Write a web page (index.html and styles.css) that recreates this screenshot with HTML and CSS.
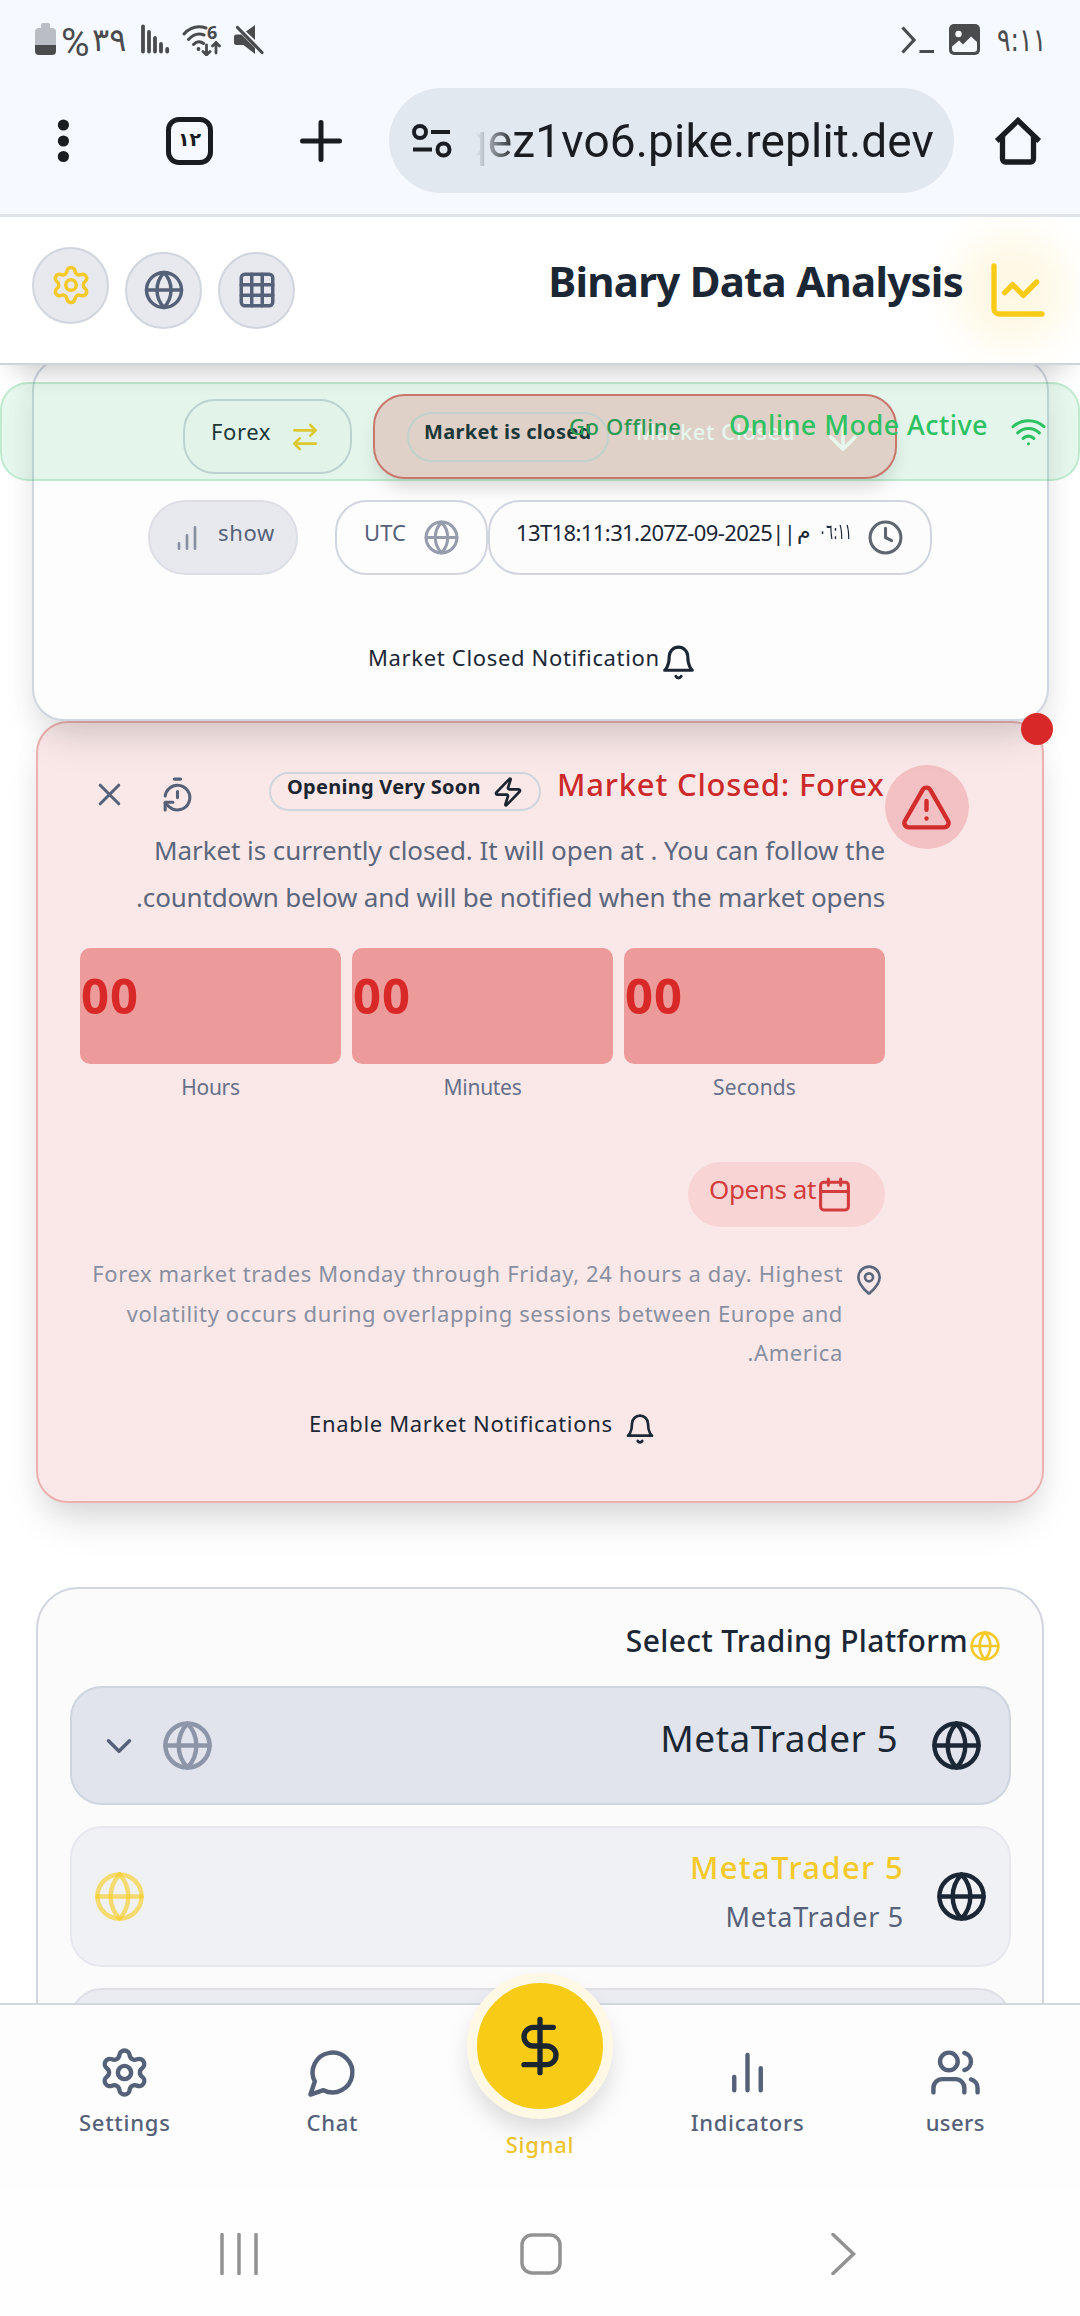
FILE: index.html
```html
<!DOCTYPE html>
<html lang="en">
<head>
<meta charset="utf-8">
<title>Binary Data Analysis</title>
<link rel="stylesheet" href="styles.css">
</head>
<body>
<svg class="sprite" xmlns="http://www.w3.org/2000/svg">
  <symbol id="gear" viewBox="0 0 24 24"><path d="M9.671 4.136a2.34 2.34 0 0 1 4.659 0 2.34 2.34 0 0 0 3.319 1.915 2.34 2.34 0 0 1 2.33 4.033 2.34 2.34 0 0 0 0 3.831 2.34 2.34 0 0 1-2.33 4.033 2.34 2.34 0 0 0-3.319 1.915 2.34 2.34 0 0 1-4.659 0 2.34 2.34 0 0 0-3.32-1.915 2.34 2.34 0 0 1-2.33-4.033 2.34 2.34 0 0 0 0-3.831A2.34 2.34 0 0 1 6.35 6.051a2.34 2.34 0 0 0 3.319-1.915"/><circle cx="12" cy="12" r="3"/></symbol>
  <symbol id="globe" viewBox="0 0 24 24"><circle cx="12" cy="12" r="10"/><path d="M12 2a14.5 14.5 0 0 0 0 20 14.5 14.5 0 0 0 0-20"/><path d="M2 12h20"/></symbol>
  <symbol id="grid" viewBox="0 0 24 24"><rect x="3" y="3" width="18" height="18" rx="2"/><path d="M3 9h18M3 15h18M9 3v18M15 3v18"/></symbol>
  <symbol id="chart-line" viewBox="0 0 24 24"><path d="M3 3v16a2 2 0 0 0 2 2h16"/><path d="m19 9-5 5-4-4-3 3"/></symbol>
  <symbol id="swap" viewBox="0 0 24 24"><path d="m16 3 4 4-4 4M20 7H4M8 21l-4-4 4-4M4 17h16"/></symbol>
  <symbol id="arrow-down" viewBox="0 0 24 24"><path d="M12 5v14M19 12l-7 7-7-7"/></symbol>
  <symbol id="wifi" viewBox="0 0 24 24"><path d="M12 20h.01M2 8.82a15 15 0 0 1 20 0M5 12.859a10 10 0 0 1 14 0M8.5 16.429a5 5 0 0 1 7 0"/></symbol>
  <symbol id="bars-up" viewBox="0 0 24 24"><path d="M6 20v-4M12 20V10M18 20V4"/></symbol>
  <symbol id="bars" viewBox="0 0 24 24"><path d="M18 20V10M12 20V4M6 20v-6"/></symbol>
  <symbol id="clock" viewBox="0 0 24 24"><circle cx="12" cy="12" r="10"/><path d="M12 6v6l4 2"/></symbol>
  <symbol id="bell" viewBox="0 0 24 24"><path d="M6 8a6 6 0 0 1 12 0c0 7 3 9 3 9H3s3-2 3-9"/><path d="M10.3 21a1.94 1.94 0 0 0 3.4 0"/></symbol>
  <symbol id="alert" viewBox="0 0 24 24"><path d="m21.73 18-8-14a2 2 0 0 0-3.48 0l-8 14A2 2 0 0 0 4 21h16a2 2 0 0 0 1.73-3M12 9v4M12 17h.01"/></symbol>
  <symbol id="zap" viewBox="0 0 24 24"><path d="M4 14a1 1 0 0 1-.78-1.63l9.9-10.2a.5.5 0 0 1 .86.46l-1.92 6.02A1 1 0 0 0 13 10h7a1 1 0 0 1 .78 1.63l-9.9 10.2a.5.5 0 0 1-.86-.46l1.92-6.02A1 1 0 0 0 11 14z"/></symbol>
  <symbol id="close" viewBox="0 0 24 24"><path d="M18 6 6 18M6 6l12 12"/></symbol>
  <symbol id="timer" viewBox="0 0 24 24"><path d="M10 2h4M12 14v-4M4 13a8 8 0 0 1 8-7 8 8 0 1 1-5.3 14L4 17.6"/><path d="M9 17H4v5"/></symbol>
  <symbol id="calendar" viewBox="0 0 24 24"><path d="M8 2v4M16 2v4M3 10h18"/><rect x="3" y="4" width="18" height="18" rx="2"/></symbol>
  <symbol id="pin" viewBox="0 0 24 24"><path d="M20 10c0 4.993-5.539 10.193-7.399 11.799a1 1 0 0 1-1.202 0C9.539 20.193 4 14.993 4 10a8 8 0 0 1 16 0"/><circle cx="12" cy="10" r="3"/></symbol>
  <symbol id="chevron" viewBox="0 0 24 24"><path d="m6 9 6 6 6-6"/></symbol>
  <symbol id="chat" viewBox="0 0 24 24"><path d="M7.9 20A9 9 0 1 0 4 16.1L2 22Z"/></symbol>
  <symbol id="dollar" viewBox="0 0 24 24"><path d="M12 2v20M17 5H9.5a3.5 3.5 0 0 0 0 7h5a3.5 3.5 0 0 1 0 7H6"/></symbol>
  <symbol id="users" viewBox="0 0 24 24"><path d="M16 21v-2a4 4 0 0 0-4-4H6a4 4 0 0 0-4 4v2"/><circle cx="9" cy="7" r="4"/><path d="M22 21v-2a4 4 0 0 0-3-3.87M16 3.13a4 4 0 0 1 0 7.75"/></symbol>
</svg>

<div class="screen">
  <div class="status">
    <svg class="battery" viewBox="0 0 22 33"><path d="M6 2a2 2 0 0 1 2-2h5a2 2 0 0 1 2 2v3h2a4 4 0 0 1 4 4v13H0V9a4 4 0 0 1 4-4h2z" fill="#babdc3"/><path d="M0 22h21v6a4 4 0 0 1-4 4H4a4 4 0 0 1-4-4z" fill="#4a4b4d"/></svg>
    <span class="percent">%</span><span class="level">٣٩</span>
    <svg class="signal-bars" viewBox="0 0 29 30" stroke="#4a4b4d" stroke-width="3.8" stroke-linecap="round"><path d="M2 2.5v25M8 8v19.500M14 14v13.500M20 20v7.500M26.200 25v2.500"/></svg>
    <svg class="wifi6" viewBox="0 0 40 32" fill="none" stroke="#4a4b4d" stroke-width="3" stroke-linecap="round"><path d="M2 10C8 3.500 16 1.500 24 4M6.500 15.500C11 10.500 17 9 22 11M11.500 20.500c3-3.300 7-3.500 10-1"/><circle cx="16.500" cy="25" r="1.200" fill="#4a4b4d" stroke-width="1.500"/><path d="M24.500 21v9M21 27.500l3.500 3.500 3.500-3.500M34 29V19M30.500 22l3.500-3.500 3.500 3.500" stroke-width="2.800"/><text x="25" y="15" font-size="18" font-weight="700" fill="#4a4b4d" stroke="none">6</text></svg>
    <svg class="mute" viewBox="0 0 31 32"><path d="M0 13a2.500 2.500 0 0 1 2.500-2.500h5L21 24v6L9.500 21H2.500A2.500 2.500 0 0 1 0 18.500zM12 7.500 21 1v15z" fill="#4a4b4d"/><path d="M3.500 3.500 28 28.500" stroke="#4a4b4d" stroke-width="3.200" stroke-linecap="round"/></svg>
    <svg class="prompt" viewBox="0 0 33 29" fill="none" stroke="#4a4b4d" stroke-width="3.200"><path d="M1.500 1.500 13 14 1.500 26.500M18.500 25.500H33"/></svg>
    <svg class="photo" viewBox="0 0 31 31"><rect width="31" height="31" rx="5" fill="#4a4b4d"/><circle cx="9.500" cy="10" r="3.200" fill="#f6f9ff"/><path d="M3 22.500 10 16.500l4 4 8-8L28 18v7a3 3 0 0 1-3 3H6a3 3 0 0 1-3-3z" fill="#f6f9ff"/></svg>
    <span class="time">٩:١١</span>
  </div>

  <div class="browser">
    <svg class="dots" viewBox="0 0 42 48" fill="#191d21"><circle cx="21.400" cy="8" r="5.600"/><circle cx="21.400" cy="24" r="5.600"/><circle cx="21.400" cy="39.500" r="5.600"/></svg>
    <div class="tabs">١٢</div>
    <svg class="plus" viewBox="0 0 42 42" stroke="#191d21" stroke-width="5" stroke-linecap="round"><path d="M21 2.500v37M2.500 21h37"/></svg>
    <div class="url">
      <svg class="tune" viewBox="0 0 40 34" fill="none" stroke="#191d21" stroke-width="4"><circle cx="8" cy="8" r="6"/><circle cx="31.500" cy="25.500" r="6"/><path d="M19 8h19M1 25.500h19"/></svg>
      <div class="address">qez1vo6.pike.replit.dev</div>
    </div>
    <svg class="home" viewBox="0 0 48 48" fill="none" stroke="#191d21" stroke-width="5.300" stroke-linecap="round"><path d="M2.800 24 24 3.500 45.200 24" stroke-linecap="butt"/><path d="M8.500 20v22a3 3 0 0 0 3 3h25a3 3 0 0 0 3-3V20"/></svg>
  </div>

  <header class="header">
    <button class="round lifted"><svg class="icon i42 gold"><use href="#gear"/></svg></button>
    <button class="round"><svg class="icon i42"><use href="#globe"/></svg></button>
    <button class="round"><svg class="icon i42"><use href="#grid"/></svg></button>
    <h1>Binary Data Analysis</h1>
    <svg class="icon brand"><use href="#chart-line"/></svg>
  </header>

  <main class="content">
    <section class="market">
      <div class="row first">
        <div class="pill forex"><span class="t forex-t">Forex</span><svg class="icon i32 gold"><use href="#swap"/></svg></div>
        <div class="closed">
          <div class="closed-badge"><span>Market is closed</span></div>
          <span class="t closed-t">Market Closed</span>
          <svg class="icon i42"><use href="#arrow-down"/></svg>
        </div>
      </div>
      <div class="row second">
        <div class="pill show"><svg class="icon i32"><use href="#bars-up"/></svg><span class="t show-t">show</span></div>
        <div class="pill utc"><span class="t utc-t">UTC</span><svg class="icon i37"><use href="#globe"/></svg></div>
        <div class="pill when"><span class="t stamp">13T18:11:31.207Z-09-2025||</span><span class="t ar meridiem">م</span><span class="t ar hour">٠٦:١١</span><svg class="icon i37"><use href="#clock"/></svg></div>
      </div>
      <div class="row notify"><span class="t notify-t">Market Closed Notification</span><svg class="icon i37"><use href="#bell"/></svg></div>
    </section>

    <section class="alert">
      <span class="dot"></span>
      <div class="alert-body">
        <div class="alert-head">
          <svg class="icon i37"><use href="#close"/></svg>
          <svg class="icon i37 timer"><use href="#timer"/></svg>
          <div class="soon"><span>Opening Very Soon</span><svg class="icon i32"><use href="#zap"/></svg></div>
          <h2>Market Closed: Forex</h2>
        </div>
        <p class="desc" dir="rtl">Market is currently closed. It will open at . You can follow the<br><span class="desc-2">countdown below and will be notified when the market opens.</span></p>
        <div class="countdown">
          <div><div class="count">00</div><div class="unit">Hours</div></div>
          <div><div class="count">00</div><div class="unit">Minutes</div></div>
          <div><div class="count">00</div><div class="unit wide">Seconds</div></div>
        </div>
        <div class="opens"><span>Opens at</span><svg class="icon i37"><use href="#calendar"/></svg></div>
        <div class="info" dir="rtl">
          <svg class="icon i32"><use href="#pin"/></svg>
          <p>Forex market trades Monday through Friday, 24 hours a day. Highest<br>volatility occurs during overlapping sessions between Europe and<br>America.</p>
        </div>
        <div class="enable"><span class="t enable-t">Enable Market Notifications</span><svg class="icon i32"><use href="#bell"/></svg></div>
      </div>
      <div class="alert-icon"><svg class="icon i53"><use href="#alert"/></svg></div>
    </section>

    <section class="platform">
      <div class="platform-title"><span>Select Trading Platform</span><svg class="icon i32 gold"><use href="#globe"/></svg></div>
      <div class="select">
        <svg class="icon i42"><use href="#chevron"/></svg>
        <svg class="icon i53 muted"><use href="#globe"/></svg>
        <span class="select-t">MetaTrader 5</span>
        <svg class="icon i53 dark"><use href="#globe"/></svg>
      </div>
      <div class="option">
        <svg class="icon i53 faded"><use href="#globe"/></svg>
        <div class="option-t"><div class="name">MetaTrader 5</div><div class="sub">MetaTrader 5</div></div>
        <svg class="icon i53 dark"><use href="#globe"/></svg>
      </div>
      <div class="option next"></div>
    </section>

    <div class="online">
      <span class="go">Go Offline</span>
      <span class="mode">Online Mode Active</span>
      <svg class="icon i37"><use href="#wifi"/></svg>
    </div>
  </main>

  <nav class="nav">
    <div class="item"><svg class="icon i53"><use href="#gear"/></svg><span>Settings</span></div>
    <div class="item"><svg class="icon i53"><use href="#chat"/></svg><span>Chat</span></div>
    <div class="item main"><div class="fab"><svg class="icon i64"><use href="#dollar"/></svg></div><span>Signal</span></div>
    <div class="item"><svg class="icon i53"><use href="#bars"/></svg><span>Indicators</span></div>
    <div class="item users"><svg class="icon i53"><use href="#users"/></svg><span>users</span></div>
  </nav>

  <div class="system">
    <svg class="sys" viewBox="0 0 42 42"><path d="M4 1.500v39M21 1.500v39M38 1.500v39"/></svg>
    <svg class="sys" viewBox="0 0 42 42"><rect x="2" y="2" width="38" height="38" rx="10"/></svg>
    <svg class="sys" viewBox="0 0 42 42"><path d="M11 1.500 31.500 21 11 40.500"/></svg>
  </div>
</div>
</body>
</html>
```
FILE: styles.css
```css
* { box-sizing: border-box; }

body {
  margin: 0;
  font-family: "Noto Sans", "DejaVu Sans", sans-serif;
  color: #1b2735;
  background: #fff;
}

h1, h2, p { margin: 0; }
button { padding: 0; font: inherit; }
span, h1, h2 { white-space: nowrap; }

.sprite { display: none; }

.screen {
  display: flex;
  flex-direction: column;
  width: 1080px;
  height: 2316px;
  overflow: hidden;
}

/* Icons */
.icon {
  flex: none;
  fill: none;
  stroke: currentColor;
  stroke-width: 2;
  stroke-linecap: round;
  stroke-linejoin: round;
}
.i32 { width: 32px; height: 32px; }
.i37 { width: 37px; height: 37px; }
.i42 { width: 42px; height: 42px; }
.i53 { width: 53px; height: 53px; }
.i64 { width: 64px; height: 64px; }
.gold { color: #f4c928; }
.dark { color: #1b2735; }
.muted { color: #8d96a8; }

/* Status bar */
.status {
  display: flex;
  align-items: flex-start;
  height: 79px;
  padding: 23px 35px 0;
  background: #f6f9ff;
  color: #4a4b4d;
}
.status svg { flex: none; }
.battery { width: 22px; height: 33px; }
.percent { width: 27px; margin-left: 4px; font: 400 39px/40px Roboto, sans-serif; letter-spacing: -1px; }
.level { width: 40px; margin-left: 4px; font: 400 32px/34px "DejaVu Sans", sans-serif; letter-spacing: -2px; }
.signal-bars { width: 29px; height: 30px; margin: 1px 0 0 9px; }
.wifi6 { width: 40px; height: 32px; margin: 1px 0 0 12px; }
.mute { width: 31px; height: 32px; margin: 1px 0 0 12px; }
.prompt { width: 33px; height: 29px; margin: 3px 0 0 auto; }
.photo { width: 31px; height: 31px; margin: 1px 0 0 15px; }
.time {
  width: 50px;
  margin-left: 15px;
  font: 400 32px/34px "DejaVu Sans", sans-serif;
  letter-spacing: -4px;
  transform: translateX(2px) scaleX(0.79);
  transform-origin: left;
}

/* Browser toolbar */
.browser {
  display: flex;
  align-items: center;
  height: 138px;
  padding: 0 38px 12px 42px;
  background: #f6f9ff;
  border-bottom: 3px solid #dfe4ea;
}
.browser svg { flex: none; }
.dots { width: 42px; height: 48px; }
.tabs {
  width: 48px;
  height: 48px;
  margin-left: 82px;
  border: 5px solid #191d21;
  border-radius: 13px;
  font: 700 19px/34px "DejaVu Sans", sans-serif;
  letter-spacing: -3px;
  text-align: center;
  color: #191d21;
}
.plus { width: 42px; height: 42px; margin-left: 87px; }
.url {
  display: flex;
  align-items: center;
  width: 565px;
  height: 105px;
  margin-left: 47px;
  padding: 0 20px 0 23px;
  border-radius: 53px;
  background: #e2e8f0;
}
.tune { width: 40px; height: 34px; }
.address {
  display: flex;
  justify-content: flex-end;
  flex: 1;
  margin-left: 24px;
  overflow: hidden;
  font: 400 46px/66px Roboto, sans-serif;
  letter-spacing: 0.15px;
  white-space: nowrap;
  color: #191d21;
  -webkit-mask-image: linear-gradient(90deg, transparent 0, #000 40px);
  mask-image: linear-gradient(90deg, transparent 0, #000 40px);
}
.home { width: 48px; height: 48px; margin-left: 40px; }

/* App header */
.header {
  position: relative;
  z-index: 3;
  display: flex;
  align-items: center;
  gap: 16px;
  height: 148px;
  padding: 0 30px 0 32px;
  border-bottom: 2px solid #ced4dc;
  background: radial-gradient(circle at 1012px 74px, #fef8e2 0, #fef9e8 35px, #fffefa 72px, #fff 88px);
  box-shadow: 0 20px 24px -14px rgba(0, 0, 0, 0.2);
}
.round {
  display: flex;
  align-items: center;
  justify-content: center;
  width: 77px;
  height: 77px;
  border: 2px solid #d0d5de;
  border-radius: 50%;
  background: #e7e9ee;
  color: #556178;
}
.lifted { margin-bottom: 10px; }
.header h1 {
  margin-left: auto;
  padding-bottom: 19px;
  font-size: 42px;
  font-weight: 700;
  line-height: 56px;
  letter-spacing: -0.74px;
}
.brand { width: 64px; height: 64px; margin-left: 7px; color: #f8cb17; }

/* Scrolling content */
.content {
  position: relative;
  flex: 1;
  overflow: hidden;
  background: #fff;
}
.row { display: flex; align-items: center; }
.t {
  padding-bottom: 11px;
  font-size: 22px;
  line-height: 30px;
}

/* Market status card */
.market {
  position: relative;
  z-index: 1;
  height: 363px;
  margin: -7px 31px 0 32px;
  padding-top: 34px;
  border: 2px solid #d0d5df;
  border-radius: 32px;
  background: #fdfdfd;
  box-shadow: 0 26px 40px -10px rgba(0, 0, 0, 0.12), 0 8px 26px rgba(0, 0, 0, 0.05);
}
.first { height: 85px; padding-left: 149px; gap: 21px; }
.second { height: 75px; margin-top: 21px; padding-left: 114px; }
.notify { height: 60px; margin-top: 57px; padding-left: 334px; }
.notify-t { width: 292px; letter-spacing: 0.66px; }
.pill {
  display: flex;
  align-items: center;
  height: 75px;
  border: 2px solid #d0d5df;
  border-radius: 32px;
}
.forex { width: 169px; padding-left: 26px; background: #fbfbfc; }
.forex .icon { margin-left: 18px; }
.forex-t { width: 60px; letter-spacing: 0.6px; }
.closed {
  display: flex;
  align-items: center;
  width: 524px;
  height: 85px;
  padding-left: 32px;
  border: 2px solid #df6e6e;
  border-radius: 32px;
  background: #f9d3d6;
  box-shadow: 0 12px 18px -4px rgba(0, 0, 0, 0.15);
  color: #fff;
}
.closed-badge {
  display: flex;
  align-items: center;
  width: 202px;
  height: 50px;
  padding: 0 0 9px 15px;
  border: 2px solid #d5d4d9;
  border-radius: 25px;
  font-size: 20px;
  font-weight: 700;
  line-height: 26px;
  letter-spacing: 0.3px;
  color: #1b2735;
}
.closed-t { width: 160px; margin-left: 27px; font-weight: 500; letter-spacing: 0.6px; }
.closed .icon { margin-left: 26px; }
.show {
  width: 150px;
  padding-left: 21px;
  border-color: #dcdfe6;
  border-radius: 38px;
  background: #e8e9ee;
  color: #556178;
}
.show .icon { color: #8890a1; }
.show-t { margin-left: 15px; letter-spacing: 0.68px; }
.utc { width: 153px; margin-left: 37px; padding-left: 27px; color: #556178; }
.utc .icon { margin-left: 18px; color: #969cab; }
.utc-t { width: 41px; letter-spacing: 0.1px; }
.when { width: 444px; padding-left: 26px; background: #fcfcfd; }
.when .icon { margin-left: 16px; color: #5f6670; }
.stamp { width: 281px; letter-spacing: -0.6px; }
.ar { font-family: "DejaVu Sans", sans-serif; }
.meridiem { width: 22px; font-size: 22px; }
.hour {
  width: 32px;
  font-size: 22px;
  letter-spacing: -3px;
  transform: scaleX(0.6);
  transform-origin: left;
}

/* Market closed alert */
.alert {
  position: relative;
  display: flex;
  height: 782px;
  margin: 0 36px;
  padding: 42px 0 0 42px;
  border: 2px solid #ecb0b0;
  border-radius: 32px;
  background: #fae8e8;
  box-shadow: 0 26px 40px -10px rgba(0, 0, 0, 0.13), 0 8px 26px rgba(0, 0, 0, 0.05);
}
.dot {
  position: absolute;
  z-index: 2;
  top: -10px;
  right: -11px;
  width: 32px;
  height: 32px;
  border-radius: 50%;
  background: #d92828;
}
.alert-body { width: 805px; padding-top: 8px; }
.alert-icon {
  display: flex;
  align-items: center;
  justify-content: center;
  width: 84px;
  height: 84px;
  padding-right: 2px;
  border-radius: 50%;
  background: #f3c1c3;
  color: #d32c2c;
}
.alert-head { display: flex; align-items: center; height: 42px; padding-left: 11px; color: #556178; }
.timer { margin-left: 31px; }
.soon {
  display: flex;
  align-items: center;
  width: 272px;
  height: 39px;
  margin: 0 0 5px 73px;
  padding-left: 16px;
  border: 2px solid #cfd5dd;
  border-radius: 20px;
  color: #1b2530;
}
.soon span {
  width: 195px;
  padding-bottom: 10px;
  font-size: 20px;
  font-weight: 700;
  line-height: 24px;
  letter-spacing: 0.26px;
}
.soon .icon { margin-left: 10px; }
.alert-head h2 {
  margin-left: 16px;
  padding-bottom: 20px;
  font-size: 31px;
  font-weight: 500;
  line-height: 40px;
  letter-spacing: 0.8px;
  color: #cc2a2a;
}
.desc {
  margin-top: 12px;
  font-size: 26px;
  line-height: 47px;
  letter-spacing: -0.08px;
  color: #5a667c;
  white-space: nowrap;
}
.desc-2 { letter-spacing: -0.19px; }
.countdown { display: grid; grid-template-columns: repeat(3, 261px); gap: 11px; margin-top: 27px; }
.count {
  height: 116px;
  padding: 15px 0 0 1px;
  border-radius: 10px;
  background: #ed9a9a;
  font-size: 49px;
  font-weight: 700;
  line-height: 64px;
  letter-spacing: 0.9px;
  color: #d92828;
}
.unit { margin-top: 9px; font-size: 21px; line-height: 28px; letter-spacing: -0.3px; text-align: center; color: #667088; }
.wide { letter-spacing: 0.1px; }
.opens {
  display: flex;
  align-items: center;
  width: 197px;
  height: 65px;
  margin: 61px 0 0 608px;
  padding-left: 21px;
  border-radius: 33px;
  background: #f8d5d4;
  color: #d23c3c;
}
.opens span { width: 107px; padding-bottom: 12px; font-size: 26px; line-height: 36px; letter-spacing: -0.4px; }
.info { display: flex; gap: 10px; margin-top: 27px; color: #888fa0; }
.info .icon { margin-top: 10px; color: #5a667c; }
.info p { font-size: 22px; line-height: 39.500px; letter-spacing: 0.62px; white-space: nowrap; }
.enable { display: flex; align-items: center; height: 40px; margin: 36px 0 0 229px; gap: 11px; }
.enable-t { letter-spacing: 0.67px; }

/* Platform picker */
.platform {
  height: 700px;
  margin: 84px 36px 0;
  padding: 32px 31px 0 32px;
  border: 2px solid #d1d6df;
  border-radius: 42px;
  background: #fbfbfb;
}
.platform-title { display: flex; align-items: center; justify-content: flex-end; height: 49px; padding-right: 10px; gap: 1px; }
.platform-title span { padding-bottom: 10px; font-size: 30px; font-weight: 500; line-height: 36px; letter-spacing: 0.32px; }
.select {
  display: flex;
  align-items: center;
  height: 119px;
  margin-top: 16px;
  padding: 0 26px;
  border: 2px solid #cfd5df;
  border-radius: 32px;
  background: #e1e4ec;
  color: #556178;
}
.select .muted { margin-left: 21px; }
.select-t {
  margin: 0 32px 0 auto;
  padding-bottom: 16px;
  font-size: 37px;
  line-height: 48px;
  letter-spacing: 0.45px;
  color: #1b2735;
}
.option {
  display: flex;
  align-items: center;
  height: 141px;
  margin-top: 21px;
  padding: 0 21px 0 21px;
  border: 2px solid #e7e8ee;
  border-radius: 32px;
  background: #f0f1f5;
}
.faded { color: rgba(248, 204, 24, 0.6); }
.option-t { margin: 0 31px 0 auto; padding-bottom: 10px; text-align: right; }
.name { height: 50px; font-size: 31px; font-weight: 500; line-height: 48px; letter-spacing: 1.35px; color: #f4c928; }
.sub { font-size: 27px; line-height: 48px; letter-spacing: 0.75px; color: #566079; }
.next { border-color: #dde0e7; background: #ebecf1; }

/* Online banner, floating over the cards */
.online {
  position: absolute;
  z-index: 2;
  top: 17px;
  left: 0;
  display: flex;
  align-items: center;
  width: 1080px;
  height: 99px;
  padding-left: 567px;
  border: 2px solid rgba(34, 180, 94, 0.2);
  border-radius: 28px;
  background: rgba(34, 197, 94, 0.115);
  color: #2dc162;
}
.go { width: 113px; padding-bottom: 12px; font-size: 22px; font-weight: 500; line-height: 30px; letter-spacing: 0.6px; color: #2a9a52; }
.mode { width: 260px; margin-left: 47px; padding-bottom: 14px; font-size: 27px; font-weight: 500; line-height: 36px; letter-spacing: 0.45px; }
.online .icon { margin-left: 21px; }

/* Bottom navigation */
.nav {
  position: relative;
  z-index: 3;
  display: grid;
  grid-template-columns: repeat(5, 1fr);
  height: 187px;
  padding: 41px 21px 0;
  border-top: 2px solid #d1d7df;
  background: #fdfdfd;
}
.item { display: flex; flex-direction: column; align-items: center; gap: 9px; color: #556178; }
.item span { font-size: 22px; font-weight: 500; line-height: 28px; letter-spacing: 0.75px; }
.item.users span { letter-spacing: 0.4px; }
.item.main span { margin-top: 84px; color: #efc52c; }
.fab {
  position: absolute;
  top: -32px;
  left: 467px;
  display: flex;
  align-items: center;
  justify-content: center;
  width: 146px;
  height: 146px;
  border: 10px solid #fff8e4;
  border-radius: 50%;
  background: #f8cb17;
  box-shadow: 0 14px 24px -2px rgba(0, 0, 0, 0.14);
  color: #1b2530;
}

/* System navigation */
.system {
  display: flex;
  justify-content: center;
  gap: 260px;
  height: 126px;
  padding: 43px 0 0 2px;
  background: #fefefe;
}
.sys { width: 42px; height: 42px; fill: none; stroke: #929292; stroke-width: 3.500; stroke-linecap: round; }
```
